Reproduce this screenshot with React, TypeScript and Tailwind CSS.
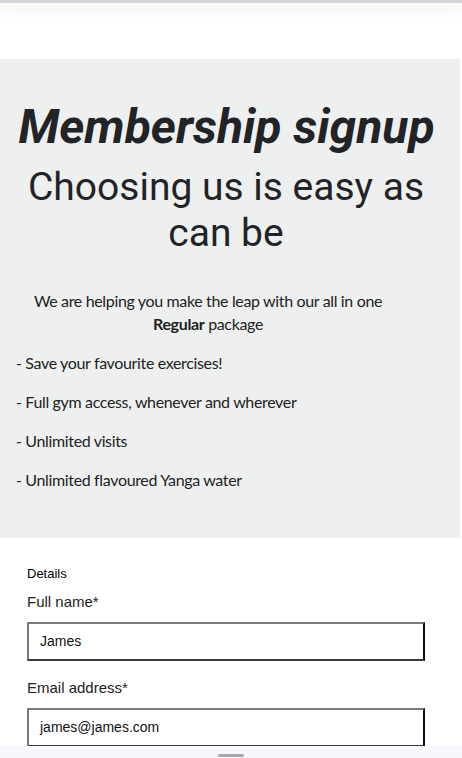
import React from "react";

export default function App() {
  return (
    <div className="relative w-[462px] h-[758px] overflow-hidden bg-white">
      <div className="h-[3px] bg-[#d4d4da] shadow-[0_3px_14px_rgba(60,60,80,0.22)]" />
      <div className="h-[56px]" />
      <section className="w-[460px] bg-[#eef0ef] h-[479px] flex flex-col">
        <h1
          className="text-center italic font-bold text-[48px] leading-[56px] text-[#212327] mt-[40px] pr-[7px]"
          style={{ fontFamily: "Roboto, sans-serif" }}
        >
          Membership signup
        </h1>
        <h2
          className="text-center text-[39px] leading-[46px] text-[#212327] mt-[9px] pl-4 pr-6"
          style={{ fontFamily: "Roboto, sans-serif" }}
        >
          Choosing us is easy as can be
        </h2>
        <div
          className="text-[16px] text-[#222] mt-[33px] px-4"
          style={{ fontFamily: "Lato, sans-serif" }}
        >
          <p className="text-center leading-[23px] pr-[44px] tracking-[-0.35px]">
            We are helping you make the leap with our all in one
            <br />
            <b className="font-bold">Regular</b> package
          </p>
          <ul className="mt-[16px] flex flex-col gap-[16px] leading-[23px] tracking-[-0.35px]">
            <li>- Save your favourite exercises!</li>
            <li>- Full gym access, whenever and wherever</li>
            <li>- Unlimited visits</li>
            <li>- Unlimited flavoured Yanga water</li>
          </ul>
        </div>
      </section>
      <form
        className="px-[27px] pt-[27px] w-[452px]"
        style={{ fontFamily: "'Liberation Sans', Arial, sans-serif" }}
      >
        <div className="text-[13px] leading-[18px] text-black">Details</div>
        <label className="block mt-[8px] text-[15px] leading-[22px] text-[#222]">
          Full name*
        </label>
        <div className="mt-[9px] h-[39px] border-2 border-t-[#7a7a7a] border-l-[#7a7a7a] border-b-[#3a3a3a] border-r-[#111] flex items-center px-[11px] text-[14px] text-[#111]">
          James
        </div>
        <label className="block mt-[16px] text-[15px] leading-[22px] text-[#222]">
          Email address*
        </label>
        <div className="mt-[9px] h-[39px] border-2 border-t-[#7a7a7a] border-l-[#7a7a7a] border-b-[#3a3a3a] border-r-[#111] flex items-center px-[11px] text-[14px] text-[#111]">
          james@james.com
        </div>
      </form>
      <div className="absolute left-0 bottom-0 w-full h-[12px] bg-[#f6f8fc] flex justify-center pt-[8px]">
        <div className="w-[26px] h-[3px] bg-[#a9a9ad] rounded-sm" />
      </div>
    </div>
  );
}
